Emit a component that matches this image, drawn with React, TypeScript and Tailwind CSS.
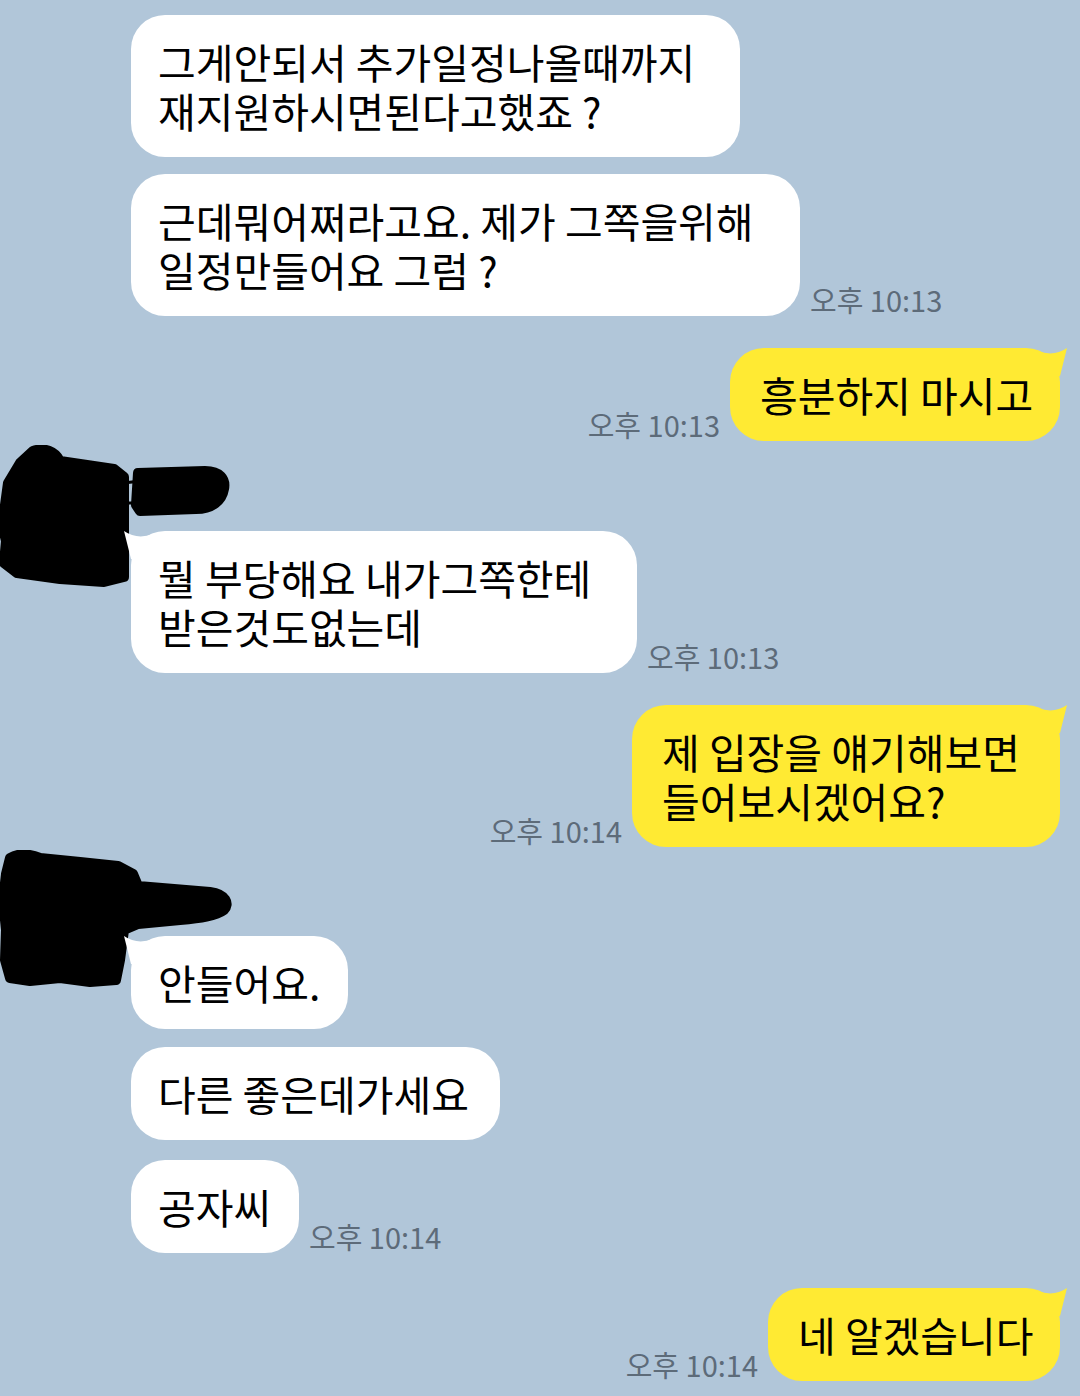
type Side = 'left' | 'right'

interface Message {
  side: Side
  lines: string[]
  width: number
  time?: string
  gap: number
  sender?: 'a' | 'b'
}

const messages: Message[] = [
  { side: 'left', lines: ['그게안되서 추가일정나올때까지', '재지원하시면된다고했죠 ?'], width: 609, gap: 15 },
  { side: 'left', lines: ['근데뭐어쩌라고요. 제가 그쪽을위해', '일정만들어요 그럼 ?'], width: 669, time: '오후 10:13', gap: 17 },
  { side: 'right', lines: ['흥분하지 마시고'], width: 330, time: '오후 10:13', gap: 32 },
  { side: 'left', lines: ['뭘 부당해요 내가그쪽한테', '받은것도없는데'], width: 506, time: '오후 10:13', gap: 4, sender: 'a' },
  { side: 'right', lines: ['제 입장을 얘기해보면', '들어보시겠어요?'], width: 428, time: '오후 10:14', gap: 32 },
  { side: 'left', lines: ['안들어요.'], width: 217, gap: 3, sender: 'b' },
  { side: 'left', lines: ['다른 좋은데가세요'], width: 369, gap: 18 },
  { side: 'left', lines: ['공자씨'], width: 168, time: '오후 10:14', gap: 20 },
  { side: 'right', lines: ['네 알겠습니다'], width: 292, time: '오후 10:14', gap: 35 },
]

// marker blots drawn over the avatar + name of each incoming group
function BlotA() {
  return (
    <svg width="240" height="145" viewBox="0 0 240 145" className="absolute left-0 top-0">
      <g fill="#000" stroke="#000" strokeWidth="10" strokeLinejoin="round" strokeLinecap="round">
        <path d="M33 6 C44 2 55 6 60 16 L114 24 L124 32 L124 132 L104 137 L60 134 L17 128 L4 118 L6 96 L2 80 L5 60 L8 38 L20 18 Z" />
        <path d="M138 28 L205 26 C220 26 226 34 224 44 C222 56 212 64 196 64 L140 66 L136 60 Z" />
        <path d="M124 38 L140 36 M124 58 L140 58" strokeWidth="3" />
      </g>
    </svg>
  )
}

function BlotB() {
  return (
    <svg width="240" height="145" viewBox="0 0 240 145" className="absolute left-0 top-0">
      <g fill="#000" stroke="#000" strokeWidth="10" strokeLinejoin="round" strokeLinecap="round">
        <path d="M10 8 C20 2 30 4 40 8 L80 12 L118 16 L133 24 L138 36 L210 42 C226 44 230 54 224 60 C216 66 200 68 180 70 L138 74 L124 80 L120 110 L116 130 L90 132 L60 128 L30 131 L10 128 L5 110 L6 80 L3 50 L6 24 Z" />
      </g>
    </svg>
  )
}

function Tail({ side, color }: { side: Side; color: string }) {
  return (
    <svg
      width="30"
      height="28"
      viewBox="0 0 30 28"
      className={side === 'right' ? 'absolute top-0 right-[-8px]' : 'absolute top-0 left-[-8px] -scale-x-100'}
    >
      <path d="M0 3 Q16 9 29 0 L22 28 L0 28 Z" fill={color} />
    </svg>
  )
}

function Time({ text }: { text: string }) {
  return <span className="text-[29px] leading-[34px] text-[#5d6b79] whitespace-nowrap">{text}</span>
}

function Bubble({ m, first }: { m: Message; first: boolean }) {
  const isRight = m.side === 'right'
  const color = isRight ? '#ffea33' : '#ffffff'
  return (
    <div
      className={[
        'relative rounded-[34px] py-[22px] text-[41px] leading-[49px] text-black whitespace-nowrap',
        isRight ? 'bg-[#ffea33] pl-[30px]' : 'bg-white pl-[27px]',
      ].join(' ')}
      style={{ width: m.width }}
    >
      {first && <Tail side={m.side} color={color} />}
      {m.lines.map((l, i) => (
        <div key={i}>{l}</div>
      ))}
    </div>
  )
}

function Row({ m, first }: { m: Message; first: boolean }) {
  if (m.side === 'right') {
    return (
      <div className="flex items-end justify-end gap-[10px] pr-[20px]" style={{ marginTop: m.gap }}>
        {m.time && <Time text={m.time} />}
        <Bubble m={m} first={first} />
      </div>
    )
  }
  const row = (
    <div className="flex items-end gap-[10px] pl-[131px]">
      <Bubble m={m} first={first} />
      {m.time && <Time text={m.time} />}
    </div>
  )
  if (!m.sender) {
    return <div style={{ marginTop: m.gap }}>{row}</div>
  }
  return (
    <div className="relative" style={{ marginTop: m.gap }}>
      {m.sender === 'a' ? <BlotA /> : <BlotB />}
      <div className="h-[86px]" />
      {row}
    </div>
  )
}

export default function App() {
  return (
    <div
      className="w-[1080px] h-[1396px] overflow-hidden bg-[#b1c6d9] flex flex-col"
      style={{ fontFamily: '"Noto Sans CJK KR", "Noto Sans", sans-serif' }}
    >
      {messages.map((m, i) => {
        const prev = messages[i - 1]
        const first = m.side === 'right' ? prev?.side !== 'right' : !!m.sender
        return <Row key={i} m={m} first={first} />
      })}
    </div>
  )
}
